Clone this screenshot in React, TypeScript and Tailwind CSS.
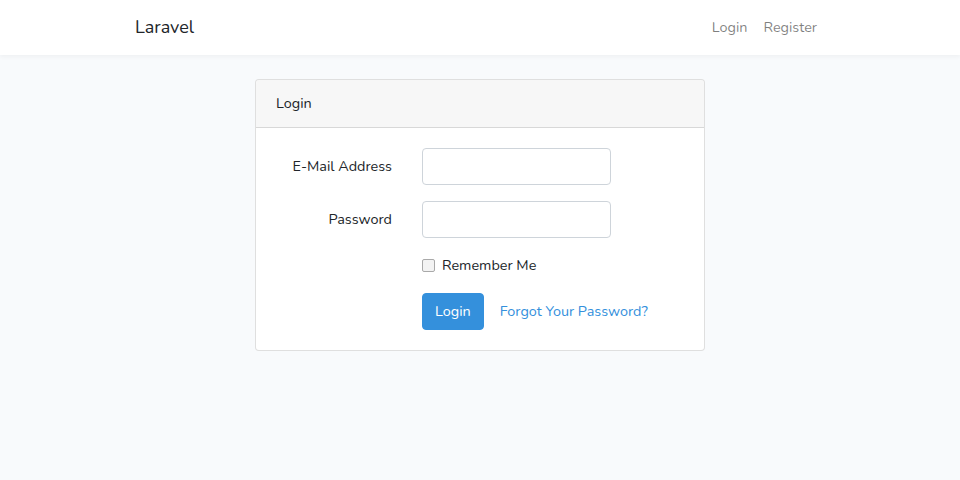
import React from "react";

export default function App() {
  return (
    <div
      className="min-h-[480px] w-full bg-[#f8fafc] text-[14.4px] leading-[1.6] text-[#212529]"
      style={{ fontFamily: "Nunito, Lato, 'Open Sans', sans-serif" }}
    >
      <nav className="bg-white shadow-[0_2px_4px_rgba(0,0,0,0.04)]">
        <div className="mx-auto flex h-[55px] w-[720px] items-center justify-between px-[15px]">
          <a className="text-[18px] leading-[28.8px] text-[#212529]">Laravel</a>
          <div className="flex">
            <a className="px-2 text-[rgba(0,0,0,0.5)]">Login</a>
            <a className="px-2 text-[rgba(0,0,0,0.5)]">Register</a>
          </div>
        </div>
      </nav>
      <main className="py-6">
        <div className="mx-auto w-[450px] rounded border border-[rgba(0,0,0,0.125)] bg-white">
          <div className="rounded-t border-b border-[rgba(0,0,0,0.125)] bg-[rgba(0,0,0,0.03)] px-5 py-3 leading-[23px]">
            Login
          </div>
          <div className="p-5">
            <div className="mx-[-15px] mb-4 flex items-center">
              <label className="w-[146px] px-[15px] text-right">E-Mail Address</label>
              <div className="w-[219px] px-[15px]">
                <div className="h-[37px] w-full rounded border border-[#ced4da] bg-white" />
              </div>
            </div>
            <div className="mx-[-15px] mb-4 flex items-center">
              <label className="w-[146px] px-[15px] text-right">Password</label>
              <div className="w-[219px] px-[15px]">
                <div className="h-[37px] w-full rounded border border-[#ced4da] bg-white" />
              </div>
            </div>
            <div className="mx-[-15px] mb-4 flex">
              <div className="ml-[146px] flex items-center px-[15px] leading-[23px]">
                <span className="mr-[7px] inline-block h-[13px] w-[13px] rounded-[2px] border border-[#a9a9a9] bg-[#f3f3f3]" />
                <span>Remember Me</span>
              </div>
            </div>
            <div className="mx-[-15px] flex">
              <div className="ml-[146px] flex items-center px-[15px]">
                <button className="h-[37px] rounded border border-[#3490dc] bg-[#3490dc] px-3 text-white">
                  Login
                </button>
                <a className="ml-1 px-3 text-[#3490dc]">Forgot Your Password?</a>
              </div>
            </div>
          </div>
        </div>
      </main>
    </div>
  );
}
